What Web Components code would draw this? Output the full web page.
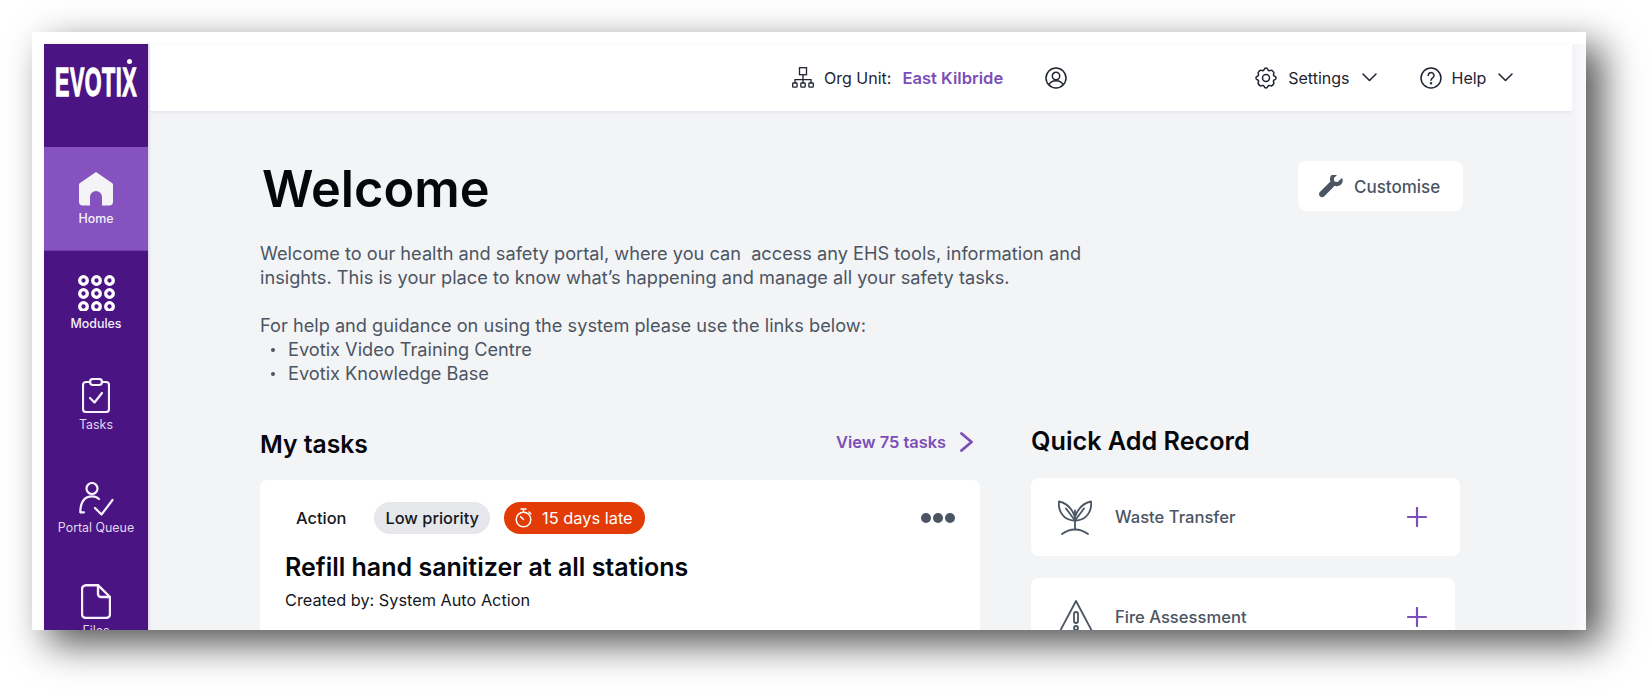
<!doctype html>
<html>
<head>
<meta charset="utf-8">
<style>
	html, body { margin: 0; height: 100%; background: #fff; overflow: hidden; }
	body { padding: 32px 0 0 32px; box-sizing: border-box; font-family: "Inter", "Liberation Sans", sans-serif; }
</style>
</head>
<body>
<app-window>
	<side-nav slot="nav"></side-nav>
	<top-bar slot="bar"></top-bar>
	<welcome-intro></welcome-intro>
	<dash-columns>
		<task-panel slot="left"></task-panel>
		<quick-panel slot="right"></quick-panel>
	</dash-columns>
</app-window>

<script>
const ICONS = {
	home: `<svg viewBox="0 0 34 34" width="34" height="34"><path fill="#f4f3f6" d="M17 0 33 11c.6.4 1 1 1 1.800V30c0 2-1.500 3.500-3.500 3.500H23V25a6 6 0 0 0-12 0v8.500H3.500C1.500 33.500 0 32 0 30V12.800c0-.8.400-1.400 1-1.800z"/></svg>`,
	modules: `<svg viewBox="0 0 37 36" width="37" height="36" fill="none" stroke="#fff" stroke-width="3.300"><circle cx="5.500" cy="5.500" r="3.800"/><circle cx="18.500" cy="5.500" r="3.800"/><circle cx="31.500" cy="5.500" r="3.800"/><circle cx="5.500" cy="18.500" r="3.800"/><circle cx="18.500" cy="18.500" r="3.800"/><circle cx="31.500" cy="18.500" r="3.800"/><circle cx="5.500" cy="31.500" r="3.800"/><circle cx="18.500" cy="31.500" r="3.800"/><circle cx="31.500" cy="31.500" r="3.800"/></svg>`,
	tasks: `<svg viewBox="0 0 28 35" width="28" height="35" fill="none" stroke="#f6f1fb" stroke-width="2.200" stroke-linecap="round" stroke-linejoin="round"><path d="M8 4H4a3 3 0 0 0-3 3v24a3 3 0 0 0 3 3h20a3 3 0 0 0 3-3V7a3 3 0 0 0-3-3h-4"/><rect x="8" y="1" width="12" height="6" rx="3"/><path d="m8 20 4.500 4.500L20 15"/></svg>`,
	queue: `<svg viewBox="0 0 35 34" width="35" height="34" fill="none" stroke="#f6f1fb" stroke-width="2.200" stroke-linecap="round" stroke-linejoin="round"><circle cx="13" cy="6.500" r="5.500"/><path d="M20 17c-1.800-1.800-4-2.700-7-2.700C6.500 14.300 1.500 19 1.300 30.300H5"/><path d="m16 26 6.500 6.500L33.500 18"/></svg>`,
	file: `<svg viewBox="0 0 30 35" width="30" height="35" fill="none" stroke="#f6f1fb" stroke-width="2.400" stroke-linecap="round" stroke-linejoin="round"><path d="M17 1.200H5a4 4 0 0 0-4 4V30a4 4 0 0 0 4 4h20a4 4 0 0 0 4-4V13z"/><path d="M17 1.200V10a3 3 0 0 0 3 3h9"/></svg>`,
	org: `<svg viewBox="0 0 22 21" width="22" height="21" fill="none" stroke="#1f2430" stroke-width="1.300"><rect x="7.500" y=".7" width="7" height="7"/><path d="M11 7.700v5M3 16v-3.300h16V16M11 12.700V16"/><rect x=".7" y="16" width="4.400" height="4.200" rx=".8"/><rect x="8.800" y="16" width="4.400" height="4.200" rx=".8"/><rect x="16.900" y="16" width="4.400" height="4.200" rx=".8"/></svg>`,
	user: `<svg viewBox="0 0 22 22" width="22" height="22" fill="none" stroke="#1f2430" stroke-width="1.500"><circle cx="11" cy="11" r="10"/><circle cx="11" cy="9" r="3.700"/><path d="M4 18c1-3 3.500-4.200 7-4.200s6 1.200 7 4.200"/></svg>`,
	gear: `<svg viewBox="0 0 24 24" width="24" height="24" fill="none" stroke="#1f2430" stroke-width="1.500" stroke-linecap="round" stroke-linejoin="round"><path d="M10.300 3.300c.4-1.800 3-1.800 3.400 0a1.700 1.700 0 0 0 2.600 1.100c1.500-.9 4.300 1.800 3.400 3.400a1.700 1.700 0 0 0 1 2.500c1.800.4 1.800 3 0 3.400a1.700 1.700 0 0 0-1 2.600c.9 1.500-1.900 4.300-3.400 3.400a1.700 1.700 0 0 0-2.600 1c-.4 1.800-3 1.800-3.400 0a1.700 1.700 0 0 0-2.600-1c-1.500.9-4.300-1.900-3.400-3.400a1.700 1.700 0 0 0-1-2.600c-1.800-.4-1.800-3 0-3.400a1.700 1.700 0 0 0 1-2.500c-.9-1.600 1.900-4.300 3.400-3.400 1 .6 2.300 0 2.600-1.100z"/><circle cx="12" cy="12" r="3.500"/></svg>`,
	help: `<svg viewBox="0 0 22 22" width="22" height="22" fill="none" stroke="#1f2430" stroke-width="1.500" stroke-linecap="round"><circle cx="11" cy="11" r="10"/><path d="M8.200 8.500a2.900 2.900 0 1 1 4.500 2.400c-1 .7-1.700 1.200-1.700 2.400"/><circle cx="11" cy="16.300" r=".5"/></svg>`,
	chevron: `<svg viewBox="0 0 15 9" width="15" height="9" fill="none" stroke="#1f2430" stroke-width="1.500" stroke-linecap="round" stroke-linejoin="round"><path d="m1 1 6.500 6.500L14 1"/></svg>`,
	wrench: `<svg viewBox="0 0 24 24" width="24" height="24"><path fill="#4b5563" d="M23.300 3.600c-.2-.4-.6-.4-.9-.2l-3.700 3.700-3.300-.6-.6-3.300L18.500-.5c.3-.3.2-.7-.2-.9-3.500-1.100-7 1.500-7.300 5-.1 1 .1 2 .4 2.900L.9 16.900c-1.200 1.200-1.200 3.200 0 4.400s3.200 1.200 4.400 0L15.700 10.800c3.800 1.300 7.700-1.200 8-5.100 0-.7-.1-1.400-.4-2.100z"/></svg>`,
	timer: `<svg viewBox="0 0 18 20" width="18" height="20" fill="none" stroke="#fff" stroke-width="1.500" stroke-linecap="round"><circle cx="8.500" cy="11.500" r="7.300"/><path d="M6 1h5M8.500 1v3M14 4l1.800 1.800M5.500 8.500l3 3"/></svg>`,
	sprout: `<svg viewBox="0 0 34 35" width="34" height="35" fill="none" stroke="#4b5563" stroke-width="1.800" stroke-linecap="round" stroke-linejoin="round"><path d="M17 17C14 8 8 3 1 1.500c-1 8 3 15.500 10 18 2.500.9 4.500 1.300 6 1.200 1.500.1 3.500-.3 6-1.200 7-2.500 11-10 10-18C26 3 20 8 17 17z"/><path d="M17 29V10.500M8 8.500c3 4 6 8 9 12M26 8.500c-3 4-6 8-9 12"/><path d="M4 34c4-3 9-4.500 13-4.500S26 31 30 34"/></svg>`,
	warning: `<svg viewBox="0 0 36 34" width="36" height="34" fill="none" stroke="#4b5563" stroke-width="1.800" stroke-linecap="round" stroke-linejoin="round"><path d="M18 1 1 33h34z"/><rect x="16" y="12" width="4" height="11" rx="2"/><circle cx="18" cy="28" r="2"/></svg>`,
	plus: `<svg viewBox="0 0 20 20" width="20" height="20" fill="none" stroke="#7c4fb8" stroke-width="2.200" stroke-linecap="round"><path d="M10 1v18M1 10h18"/></svg>`,
	arrow: `<svg viewBox="0 0 13 20" width="13" height="20" fill="none" stroke="#7c4fb8" stroke-width="2.800" stroke-linecap="round" stroke-linejoin="round"><path d="m1.500 1.500 10 8.500-10 8.500"/></svg>`,
};

class AppWindow extends HTMLElement {
	constructor() {
		super();
		this.attachShadow({ mode: "open" });
		this.shadowRoot.innerHTML = `
			<style>
				:host { display: block; width: 1554px; height: 598px; background: #fff; box-shadow: 16px 14px 36px rgba(0,0,0,.68); position: relative; }
				.frame { box-sizing: border-box; height: 100%; padding: 12px 0 0 12px; display: flex; overflow: hidden; }
				.content { flex: none; width: 1424px; background: #f3f4f6; display: flex; flex-direction: column; }
				.main { flex: none; padding: 0 109px 0 112px; }
				.fade { width: 14px; flex: none; background: linear-gradient(90deg, #f3f4f6, #fbf9fd); }
			</style>
			<div class="frame">
				<slot name="nav"></slot>
				<div class="content">
					<slot name="bar"></slot>
					<div class="main"><slot></slot></div>
				</div>
				<div class="fade"></div>
			</div>
		`;
	}
}

class SideNav extends HTMLElement {
	constructor() {
		super();
		this.attachShadow({ mode: "open" });
		this.shadowRoot.innerHTML = `
			<style>
				:host { display: block; flex: none; position: relative; width: 104px; height: 640px; background: #4a1582; color: #fff; box-shadow: 1px 0 3px rgba(74,21,130,.14); }
				.brand { height: 103px; box-sizing: border-box; padding-top: 14px; position: relative; overflow: hidden; }
				.logo { display: block; font: 700 41px/48px "Liberation Sans", sans-serif; letter-spacing: 1px; -webkit-text-stroke: 1.300px #fff; transform: scaleX(.525); transform-origin: 0 0; margin-left: 11px; white-space: nowrap; }
				.dot { position: absolute; left: 83px; top: 15px; width: 5px; height: 5px; border-radius: 50%; background: #fff; }
			</style>
			<div class="brand"><span class="logo">EVOTIX</span><span class="dot"></span></div>
			<nav-item icon="home" label="Home" active top="25" gap="5"></nav-item>
			<nav-item icon="modules" label="Modules" bold top="24" gap="5"></nav-item>
			<nav-item icon="tasks" label="Tasks" top="24" gap="4"></nav-item>
			<nav-item icon="queue" label="Portal Queue" top="25" gap="4"></nav-item>
			<nav-item icon="file" label="Files" top="24" gap="4"></nav-item>
		`;
	}
}

class NavItem extends HTMLElement {
	constructor() {
		super();
		this.attachShadow({ mode: "open" });
	}

	connectedCallback() {
		const bold = this.hasAttribute("bold") || this.hasAttribute("active");
		this.shadowRoot.innerHTML = `
			<style>
				:host { display: flex; flex-direction: column; align-items: center; box-sizing: border-box; height: 103px; padding-top: ${this.getAttribute("top")}px; }
				:host([active]) { background: #8652bf; height: 104px; border-bottom: 1px solid #7440ad; }
				svg { display: block; }
				span { font-size: 12.400px; line-height: 16px; margin-top: ${this.getAttribute("gap")}px; font-weight: ${bold ? 500 : 400}; color: ${bold ? "#f4f0fa" : "#e2d6f0"}; white-space: nowrap; }
			</style>
			${ICONS[this.getAttribute("icon")]}
			<span>${this.getAttribute("label")}</span>
		`;
	}
}

class TopBar extends HTMLElement {
	constructor() {
		super();
		this.attachShadow({ mode: "open" });
		this.shadowRoot.innerHTML = `
			<style>
				:host { display: flex; flex: none; align-items: center; box-sizing: border-box; height: 67px; margin-left: 2px; padding-left: 642px; background: #fff; box-shadow: 0 1px 3px #e4dff0; font-size: 16px; color: #1f2430; }
				svg { display: block; flex: none; }
				.org { margin-left: 10px; }
				b { margin-left: 11px; font-size: 16.600px; font-weight: 600; color: #7c4fb8; }
				.user { margin-left: 42px; }
				.settings { margin-left: 187px; }
				.t { margin-left: 10px; }
				.c { margin-left: 12px; }
				.help { margin-left: 43px; }
			</style>
			${ICONS.org}
			<span class="org">Org Unit:</span><b>East Kilbride</b>
			<span class="user">${ICONS.user}</span>
			<span class="settings">${ICONS.gear}</span><span class="t">Settings</span><span class="c">${ICONS.chevron}</span>
			<span class="help">${ICONS.help}</span><span class="t">Help</span><span class="c">${ICONS.chevron}</span>
		`;
	}
}

class WelcomeIntro extends HTMLElement {
	constructor() {
		super();
		this.attachShadow({ mode: "open" });
		this.shadowRoot.innerHTML = `
			<style>
				:host { display: block; color: #4b5563; font-size: 18.200px; line-height: 24px; }
				.head { display: flex; justify-content: space-between; align-items: flex-start; padding: 50px 0 0 2px; height: 130px; box-sizing: border-box; }
				h1 { margin: 0; font-size: 50.500px; line-height: 56px; font-weight: 600; color: #05070c; }
				button { display: flex; align-items: center; gap: 11px; height: 50px; width: 165px; box-sizing: border-box; padding: 1px 0 0 21px; border: 0; border-radius: 8px; background: #fff; color: #4b5563; font: 500 17px "Inter", sans-serif; }
				p { margin: 0 0 24px; }
				ul { margin: 0; padding: 0 0 0 28px; list-style: none; }
				li { position: relative; }
				li::before { content: ""; position: absolute; left: -17px; top: 11px; width: 4px; height: 4px; border-radius: 50%; background: #4b5563; }
			</style>
			<div class="head">
				<h1>Welcome</h1>
				<button>${ICONS.wrench}<span>Customise</span></button>
			</div>
			<p>Welcome to our health and safety portal, where you can&nbsp; access any EHS tools, information and<br>insights. This is your place to know what’s happening and manage all your safety tasks.</p>
			<div>For help and guidance on using the system please use the links below:</div>
			<ul><li>Evotix Video Training Centre</li><li>Evotix Knowledge Base</li></ul>
		`;
	}
}

class DashColumns extends HTMLElement {
	constructor() {
		super();
		this.attachShadow({ mode: "open" });
		this.shadowRoot.innerHTML = `
			<style>
				:host { display: grid; grid-template-columns: 720px 429px; column-gap: 51px; margin-top: 41px; }
			</style>
			<slot name="left"></slot>
			<slot name="right"></slot>
		`;
	}
}

class TaskPanel extends HTMLElement {
	constructor() {
		super();
		this.attachShadow({ mode: "open" });
		this.shadowRoot.innerHTML = `
			<style>
				:host { display: block; }
				.head { display: flex; align-items: center; justify-content: space-between; height: 36px; margin-bottom: 18px; padding-right: 7px; }
				h2 { margin: 0; font-size: 24.700px; font-weight: 600; color: #05070c; }
				a { display: flex; align-items: center; gap: 14px; margin-top: -4px; font-size: 16.400px; font-weight: 600; color: #7c4fb8; }
				svg { display: block; }
				.card { background: #fff; border-radius: 8px; height: 160px; box-sizing: border-box; padding: 22px 25px 0 25px; }
				.row { display: flex; align-items: center; height: 32px; font-size: 16.400px; font-weight: 500; color: #141821; }
				.type { margin: 0 28px 0 11px; }
				.pill { height: 32px; box-sizing: border-box; display: flex; align-items: center; border-radius: 16px; padding: 0 11px; }
				.low { background: #e5e7eb; margin-right: 14px; }
				.late { background: #e33b06; color: #fff; gap: 9px; font-weight: 400; padding-right: 12px; }
				.dots { margin-left: auto; display: flex; gap: 2px; }
				.dots i { width: 10px; height: 10px; border-radius: 50%; background: #4b5563; }
				h3 { margin: 17px 0 0; font-size: 25px; line-height: 32px; font-weight: 600; color: #05070c; }
				.by { margin-top: 5px; font-size: 16.300px; line-height: 24px; color: #141821; }
			</style>
			<div class="head">
				<h2>My tasks</h2>
				<a>View 75 tasks ${ICONS.arrow}</a>
			</div>
			<div class="card">
				<div class="row">
					<span class="type">Action</span>
					<span class="pill low">Low priority</span>
					<span class="pill late">${ICONS.timer}15 days late</span>
					<span class="dots"><i></i><i></i><i></i></span>
				</div>
				<h3>Refill hand sanitizer at all stations</h3>
				<div class="by">Created by: System Auto Action</div>
			</div>
		`;
	}
}

class QuickPanel extends HTMLElement {
	constructor() {
		super();
		this.attachShadow({ mode: "open" });
		this.shadowRoot.innerHTML = `
			<style>
				:host { display: block; }
				h2 { margin: -2px 0 20px; height: 34px; font-size: 25.200px; line-height: 34px; font-weight: 600; color: #05070c; }
			</style>
			<h2>Quick Add Record</h2>
			<quick-card icon="sprout" label="Waste Transfer"></quick-card>
			<quick-card icon="warning" label="Fire Assessment" narrow></quick-card>
		`;
	}
}

class QuickCard extends HTMLElement {
	constructor() {
		super();
		this.attachShadow({ mode: "open" });
	}

	connectedCallback() {
		this.shadowRoot.innerHTML = `
			<style>
				:host { display: flex; align-items: center; box-sizing: border-box; height: 78px; margin-bottom: 22px; padding: 0 33px 0 27px; background: #fff; border-radius: 8px; font-size: 16.600px; font-weight: 500; color: #4b5563; }
				:host([narrow]) { margin-right: 5px; padding-right: 28px; }
				:host([narrow]) span { margin-left: 21px; }
				svg { display: block; flex: none; }
				span { margin-left: 23px; flex: 1; }
			</style>
			${ICONS[this.getAttribute("icon")]}
			<span>${this.getAttribute("label")}</span>
			${ICONS.plus}
		`;
	}
}

customElements.define("app-window", AppWindow);
customElements.define("side-nav", SideNav);
customElements.define("nav-item", NavItem);
customElements.define("top-bar", TopBar);
customElements.define("welcome-intro", WelcomeIntro);
customElements.define("dash-columns", DashColumns);
customElements.define("task-panel", TaskPanel);
customElements.define("quick-panel", QuickPanel);
customElements.define("quick-card", QuickCard);
</script>
</body>
</html>
